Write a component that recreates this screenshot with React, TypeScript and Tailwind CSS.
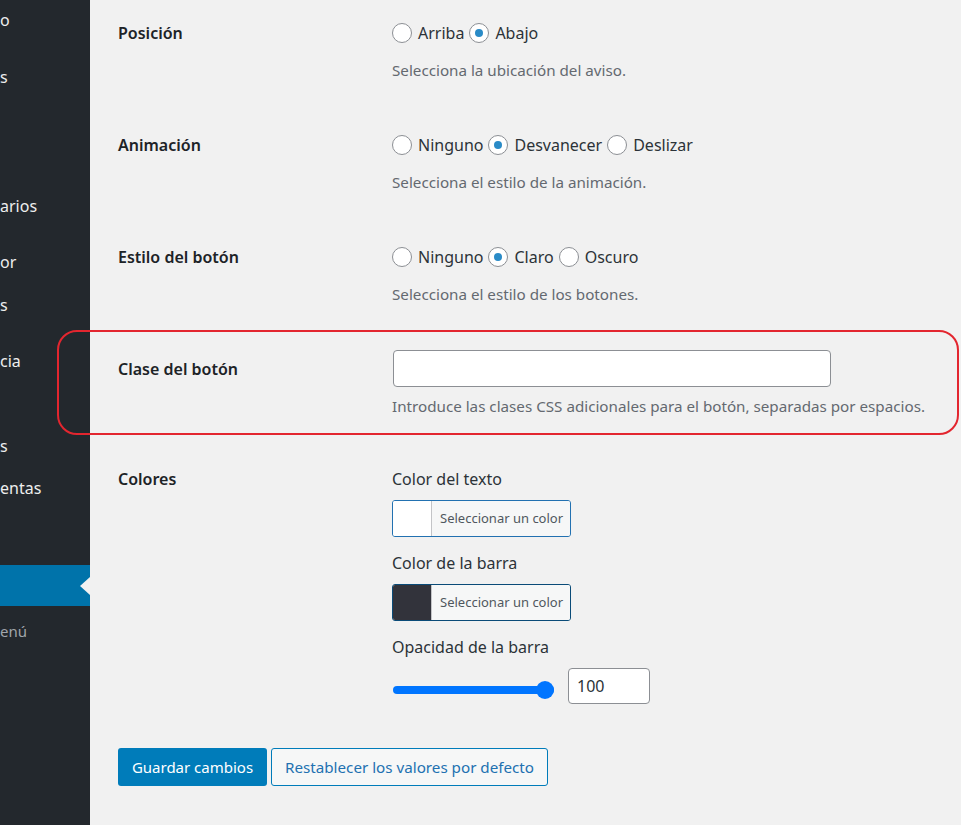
import React from "react";

const font = { fontFamily: '"Noto Sans", "Open Sans", Arial, sans-serif' };

function Radio({ checked, label }: { checked?: boolean; label: string }) {
  return (
    <span className="inline-flex items-center mr-[5px]">
      <span className="w-[20px] h-[20px] rounded-full border border-[#8c8f94] bg-white flex items-center justify-center mr-[6px]">
        {checked && <span className="w-[8px] h-[8px] rounded-full bg-[#2a8bc7]" />}
      </span>
      <span className="text-[16px] text-[#2c3338]">{label}</span>
    </span>
  );
}

function RadioRow({
  label,
  options,
  checked,
  desc,
  mt,
}: {
  label: string;
  options: string[];
  checked: number;
  desc: string;
  mt: string;
}) {
  return (
    <div className={`flex ${mt}`}>
      <div className="w-[274px] text-[16px] font-semibold text-[#1d2327] leading-[24px]">{label}</div>
      <div>
        <div className="h-[24px] flex items-center">
          {options.map((o, i) => (
            <Radio key={o} label={o} checked={i === checked} />
          ))}
        </div>
        <div className="mt-[14px] text-[15.2px] leading-[22px] text-[#646970]">{desc}</div>
      </div>
    </div>
  );
}

function ColorButton({ swatch, dark }: { swatch: string; dark?: boolean }) {
  return (
    <div
      className={`w-[179px] h-[37px] rounded-[3px] border flex overflow-hidden ${
        dark ? "border-[#0a4b78]" : "border-[#2271b1]"
      }`}
    >
      <div className="w-[39px] h-full border-r border-[#c3c4c7]" style={{ background: swatch }} />
      <div className="flex-1 bg-[#f6f7f7] flex items-center pl-[8px] text-[13px] text-[#50575e]">
        Seleccionar un color
      </div>
    </div>
  );
}

export default function App() {
  return (
    <div className="relative w-[961px] h-[825px] flex overflow-hidden bg-[#f1f1f1]" style={font}>
      {/* Sidebar */}
      <div className="w-[90px] h-full bg-[#23282d] flex flex-col text-[16px] text-[#eeeeee]">
        <div className="h-[24px] leading-[24px] mt-[8px]">o</div>
        <div className="h-[24px] leading-[24px] mt-[33px]">s</div>
        <div className="h-[24px] leading-[24px] mt-[105px]">arios</div>
        <div className="h-[24px] leading-[24px] mt-[32px]">or</div>
        <div className="h-[24px] leading-[24px] mt-[19px]">s</div>
        <div className="h-[24px] leading-[24px] mt-[32px]">cia</div>
        <div className="h-[24px] leading-[24px] mt-[61px]">s</div>
        <div className="h-[24px] leading-[24px] mt-[18px]">entas</div>
        <div className="h-[41px] mt-[65px] bg-[#0073aa] flex justify-end items-center">
          <div className="w-0 h-0 border-y-[9px] border-y-transparent border-r-[10px] border-r-[#f1f1f1]" />
        </div>
        <div className="h-[24px] leading-[24px] mt-[13px] text-[15px] text-[#a0a5aa]">enú</div>
      </div>

      {/* Main */}
      <div className="flex-1 pl-[28px] pt-[21px]">
        <RadioRow
          label="Posición"
          options={["Arriba", "Abajo"]}
          checked={1}
          desc="Selecciona la ubicación del aviso."
          mt="mt-0"
        />
        <RadioRow
          label="Animación"
          options={["Ninguno", "Desvanecer", "Deslizar"]}
          checked={1}
          desc="Selecciona el estilo de la animación."
          mt="mt-[52px]"
        />
        <RadioRow
          label="Estilo del botón"
          options={["Ninguno", "Claro", "Oscuro"]}
          checked={1}
          desc="Selecciona el estilo de los botones."
          mt="mt-[52px]"
        />

        {/* Clase del boton */}
        <div className="flex mt-[45px]">
          <div className="w-[274px] h-[37px] flex items-center text-[16px] font-semibold text-[#1d2327]">
            Clase del botón
          </div>
          <div>
            <div className="w-[438px] h-[37px] ml-[1px] bg-white border border-[#8c8f94] rounded-[4px]" />
            <div className="mt-[8px] text-[15.2px] leading-[22px] text-[#646970]">
              Introduce las clases CSS adicionales para el botón, separadas por espacios.
            </div>
          </div>
        </div>

        {/* Colores */}
        <div className="flex mt-[50px]">
          <div className="w-[274px] text-[16px] font-semibold text-[#1d2327] leading-[24px]">Colores</div>
          <div>
            <div className="text-[16px] leading-[24px] text-[#2c3338]">Color del texto</div>
            <div className="mt-[9px]">
              <ColorButton swatch="#ffffff" />
            </div>
            <div className="mt-[14px] text-[16px] leading-[24px] text-[#2c3338]">Color de la barra</div>
            <div className="mt-[9px]">
              <ColorButton swatch="#32333b" dark />
            </div>
            <div className="mt-[14px] text-[16px] leading-[24px] text-[#2c3338]">Opacidad de la barra</div>
            <div className="mt-[9px] flex items-center">
              <div className="relative w-[161px] h-[18px] ml-[1px] mt-[8px] flex items-center">
                <div className="w-full h-[8px] rounded-full bg-[#0075ff]" />
                <div className="absolute right-0 top-0 w-[18px] h-[18px] rounded-full bg-[#0075ff]" />
              </div>
              <div className="ml-[14px] w-[82px] h-[36px] bg-white border border-[#8c8f94] rounded-[4px] flex items-center pl-[8px] text-[16px] text-[#2c3338]">
                100
              </div>
            </div>
          </div>
        </div>

        {/* Buttons */}
        <div className="flex mt-[44px] gap-[4px]">
          <div className="w-[149px] h-[38px] rounded-[3px] bg-[#007cba] text-white text-[15px] flex items-center justify-center">
            Guardar cambios
          </div>
          <div className="w-[277px] h-[38px] rounded-[3px] bg-[#f6f7f7] border border-[#007cba] text-[#2271b1] text-[15.2px] flex items-center justify-center">
            Restablecer los valores por defecto
          </div>
        </div>
      </div>

      {/* Red highlight */}
      <div className="absolute left-[57px] top-[330px] w-[902px] h-[105px] border-2 border-[#e3262f] rounded-[20px] pointer-events-none" />
    </div>
  );
}
